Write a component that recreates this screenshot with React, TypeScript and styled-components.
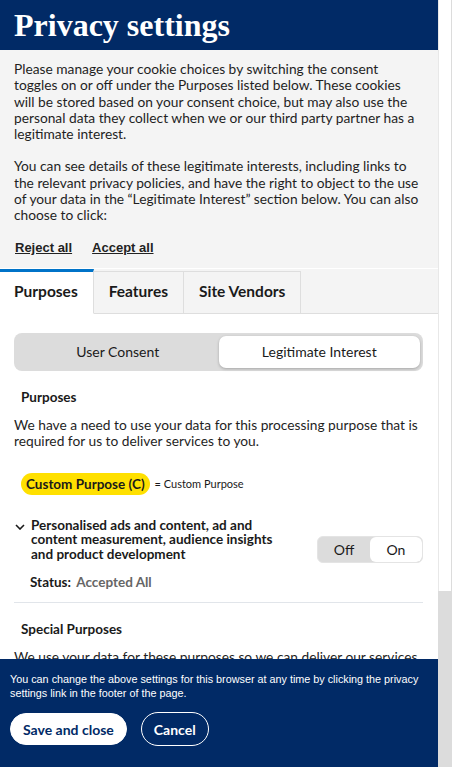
import styled, { createGlobalStyle } from 'styled-components';

const GlobalStyle = createGlobalStyle`
  html, body {
    margin: 0;
    padding: 0;
    height: 100%;
    overflow: hidden;
  }
  body {
    font-family: Lato, "Noto Sans", sans-serif;
    color: #1a1a1a;
  }
`;

export default function App() {
  return (
    <>
      <GlobalStyle />
      <Page>
        <Panel>
          <ScrollArea>
            <Header>
              <h1>Privacy settings</h1>
            </Header>

            <Intro>
              <p>
                Please manage your cookie choices by switching the consent toggles on or off under
                the Purposes listed below. These cookies will be stored based on your consent
                choice, but may also use the personal data they collect when we or our third party
                partner has a legitimate interest.
              </p>
              <p>
                You can see details of these legitimate interests, including links to the relevant
                privacy policies, and have the right to object to the use of your data in the
                &ldquo;Legitimate Interest&rdquo; section below. You can also choose to click:
              </p>
              <Links>
                <a href="#">Reject all</a>
                <a href="#">Accept all</a>
              </Links>
            </Intro>

            <Tabs>
              <Tab $active>Purposes</Tab>
              <Tab>Features</Tab>
              <Tab>Site Vendors</Tab>
              <TabFill />
            </Tabs>

            <Content>
              <Segmented>
                <Segment>User Consent</Segment>
                <Segment $active>Legitimate Interest</Segment>
              </Segmented>

              <SectionTitle>Purposes</SectionTitle>
              <BodyText>
                We have a need to use your data for this processing purpose that is required for us
                to deliver services to you.
              </BodyText>

              <Legend>
                <Badge>Custom Purpose (C)</Badge>
                <span>= Custom Purpose</span>
              </Legend>

              <Item>
                <ItemHead>
                  <Chevron viewBox="0 0 10 6" aria-hidden>
                    <path d="M1 1l4 4 4-4" fill="none" stroke="#1a1a1a" strokeWidth="1.6" />
                  </Chevron>
                  <ItemTitle>
                    Personalised ads and content, ad and content measurement, audience insights and
                    product development
                  </ItemTitle>
                  <Toggle>
                    <ToggleOption>Off</ToggleOption>
                    <ToggleOption $active>On</ToggleOption>
                  </Toggle>
                </ItemHead>
                <Status>
                  Status: <span>Accepted All</span>
                </Status>
              </Item>

              <SectionTitle>Special Purposes</SectionTitle>
              <BodyText>
                We use your data for these purposes so we can deliver our services and keep them
                secure.
              </BodyText>
            </Content>
          </ScrollArea>

          <Footer>
            <p>
              You can change the above settings for this browser at any time by clicking the privacy
              settings link in the footer of the page.
            </p>
            <Buttons>
              <Button $primary>Save and close</Button>
              <Button>Cancel</Button>
            </Buttons>
          </Footer>
        </Panel>

        <Scrollbar>
          <Thumb />
        </Scrollbar>
      </Page>
    </>
  );
}

const Page = styled.div`
  display: flex;
  height: 100vh;
  width: 452px;
  background: #fff;
`;

const Panel = styled.div`
  width: 438px;
  display: flex;
  flex-direction: column;
`;

const ScrollArea = styled.div`
  flex: 1;
  overflow: hidden;
  background: #fff;
`;

const Header = styled.div`
  background: #012a66;
  height: 50px;
  padding: 0 14px;
  display: flex;
  align-items: center;

  h1 {
    margin: 0;
    color: #fff;
    font-family: "Liberation Serif", "DejaVu Serif", serif;
    font-size: 32px;
    font-weight: 700;
  }
`;

const Intro = styled.div`
  background: #f4f4f4;
  padding: 11px 14px 12px;
  font-size: 13.75px;
  line-height: 16.3px;
  color: #1f1f1f;

  p {
    margin: 0 0 16px;
  }
`;

const Links = styled.div`
  display: flex;
  gap: 20px;
  padding: 0 1px;

  a {
    font-family: "Liberation Sans", Arial, sans-serif;
    font-size: 13px;
    font-weight: 700;
    color: #222;
    text-decoration: underline;
  }
`;

const Tabs = styled.div`
  display: flex;
  background: #f4f4f4;
  height: 45px;
  margin-top: 1px;
`;

const Tab = styled.div<{ $active?: boolean }>`
  padding: 0 15px 2px 14px;
  display: flex;
  align-items: center;
  font-size: 15.5px;
  font-weight: 700;
  color: #1a1a1a;
  background: ${(p) => (p.$active ? '#fff' : '#f4f4f4')};
  border-top: 3px solid ${(p) => (p.$active ? '#0073c8' : '#dedede')};
  border-right: 1px solid #dedede;
  border-bottom: 1px solid ${(p) => (p.$active ? '#fff' : '#dedede')};
  ${(p) => (p.$active ? '' : 'border-top-width: 1px; margin-top: 2px; padding: 0 15px 2px;')}
`;

const TabFill = styled.div`
  flex: 1;
  border-bottom: 1px solid #dedede;
`;

const Content = styled.div`
  padding: 19px 15px 0 14px;
`;

const Segmented = styled.div`
  display: grid;
  grid-template-columns: 1fr 1fr;
  background: #dcdcdc;
  border-radius: 8px;
  padding: 3px;
  height: 32px;
`;

const Segment = styled.div<{ $active?: boolean }>`
  display: flex;
  align-items: center;
  justify-content: center;
  font-size: 14px;
  color: #1a1a1a;
  border-radius: 7px;
  background: ${(p) => (p.$active ? '#fff' : 'transparent')};
  box-shadow: ${(p) => (p.$active ? '0 1px 3px rgba(0,0,0,0.25)' : 'none')};
`;

const SectionTitle = styled.h3`
  margin: 18px 0 0 7px;
  font-size: 13.5px;
  font-weight: 700;
  line-height: 16px;
`;

const BodyText = styled.p`
  margin: 12px 0 0;
  font-size: 13.75px;
  line-height: 16.3px;
  color: #1f1f1f;
`;

const Legend = styled.div`
  display: flex;
  align-items: center;
  gap: 5px;
  margin: 23px 0 0 7px;
  font-size: 11px;
`;

const Badge = styled.span`
  background: #ffe000;
  border-radius: 11px;
  padding: 3px 5px;
  font-size: 13.5px;
  font-weight: 700;
  line-height: 16px;
`;

const Item = styled.div`
  margin-top: 23px;
  padding-bottom: 12px;
  border-bottom: 1px solid #e1e5ea;
`;

const ItemHead = styled.div`
  display: flex;
  align-items: flex-start;
`;

const Chevron = styled.svg`
  width: 10px;
  height: 6px;
  margin: 6px 6px 0 1px;
  flex-shrink: 0;
`;

const ItemTitle = styled.div`
  flex: 1;
  font-size: 13.5px;
  font-weight: 700;
  line-height: 14.5px;
  padding-right: 20px;
`;

const Toggle = styled.div`
  display: grid;
  grid-template-columns: 1fr 1fr;
  width: 106px;
  height: 27px;
  margin-top: 18px;
  background: #dcdcdc;
  border: 1px solid #e4e4e4;
  border-radius: 6px;
  overflow: hidden;
  box-sizing: border-box;
`;

const ToggleOption = styled.div<{ $active?: boolean }>`
  display: flex;
  align-items: center;
  justify-content: center;
  font-size: 14px;
  background: ${(p) => (p.$active ? '#fff' : 'transparent')};
  border-radius: ${(p) => (p.$active ? '6px' : '0')};
`;

const Status = styled.div`
  margin: 11px 0 0 16px;
  font-size: 13.5px;
  font-weight: 700;

  span {
    margin-left: 2px;
    color: #666;
  }
`;

const Footer = styled.div`
  background: #012a66;
  color: #fff;
  padding: 13px 10px 21px;

  p {
    margin: 0;
    font-family: "Liberation Sans", Arial, sans-serif;
    font-size: 10.8px;
    line-height: 14px;
  }
`;

const Buttons = styled.div`
  display: flex;
  gap: 14px;
  margin-top: 12px;
  align-items: center;
`;

const Button = styled.button<{ $primary?: boolean }>`
  font-family: Lato, "Noto Sans", sans-serif;
  font-size: 14px;
  font-weight: 700;
  height: ${(p) => (p.$primary ? '32px' : '34px')};
  padding: 0 12px;
  border-radius: 17px;
  border: 1px solid #fff;
  background: ${(p) => (p.$primary ? '#fff' : 'transparent')};
  color: ${(p) => (p.$primary ? '#012a66' : '#fff')};
  cursor: pointer;
`;

const Scrollbar = styled.div`
  width: 14px;
  border-left: 1px solid #e8e8e8;
  border-right: 1px solid #dcdcdc;
  box-sizing: border-box;
  display: flex;
  flex-direction: column;
  justify-content: flex-end;
`;

const Thumb = styled.div`
  height: 176px;
  background: #dcdcdc;
  margin: 0 -1px;
`;
